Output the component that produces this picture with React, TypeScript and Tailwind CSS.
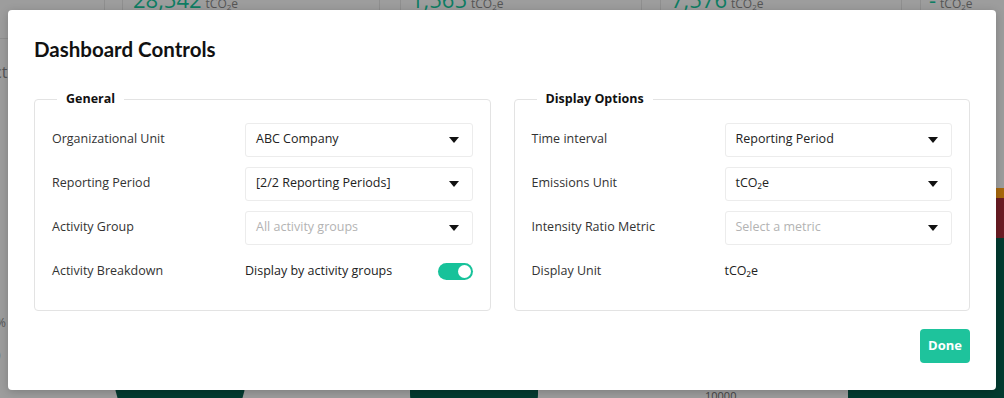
import React, { useState } from 'react';

const Caret = () => (
  <svg width="10" height="6" viewBox="0 0 10 6" className="shrink-0">
    <path d="M0 0 L10 0 L5 6 Z" fill="#111" />
  </svg>
);

interface SelectProps {
  value: string;
  placeholder?: boolean;
}

const SelectBox = ({ value, placeholder }: SelectProps) => (
  <div className="flex h-[34px] flex-1 items-center justify-between rounded-[3px] border border-[#ececec] bg-white pr-[13px] pl-[10px]">
    <span className={placeholder ? 'text-[#b3b3b3]' : 'text-[#222]'}>{value}</span>
    <Caret />
  </div>
);

const Row = ({ label, children }: { label: string; children: React.ReactNode }) => (
  <div className="flex h-[34px] items-center">
    <div className="w-[193px] shrink-0 text-[#333]">{label}</div>
    {children}
  </div>
);

const Toggle = () => {
  const [on, setOn] = useState(true);
  return (
    <button
      onClick={() => setOn(!on)}
      className={`flex h-[17px] w-[35px] items-center rounded-full p-[2px] ${on ? 'justify-end bg-[#17c29a]' : 'justify-start bg-[#ccc]'}`}
    >
      <span className="size-[13px] rounded-full bg-white" />
    </button>
  );
};

const Group = ({ title, children }: { title: string; children: React.ReactNode }) => (
  <fieldset className="flex-1 rounded-[4px] border border-[#e3e3e3] px-[17px] pt-[14px] pb-[21px]">
    <legend className="ml-[5px] px-[9px] text-[12.5px] font-bold text-[#111]">{title}</legend>
    <div className="flex flex-col gap-[10px]">{children}</div>
  </fieldset>
);

const BgStat = ({ value }: { value: string }) => (
  <div className="flex items-end gap-[4px] leading-none">
    <span className="text-[22px] text-[#0e7d63]">{value}</span>
    <span className="text-[12px] text-[#555]">
      tCO<sub className="text-[8px]">2</sub>e
    </span>
  </div>
);

export default function App() {
  return (
    <div
      className="relative h-[398px] w-[1004px] overflow-hidden bg-[#9d9d9d]"
      style={{ fontFamily: '"Open Sans", "Noto Sans", sans-serif' }}
    >
      {/* dimmed dashboard behind the dialog */}
      <div className="absolute top-[-12px] left-0 flex h-[22px] w-full">
        <div className="w-[105px] border-r border-[#8f8f8f]" />
        <div className="ml-[17px] flex w-[258px] items-end border-x border-[#8f8f8f] pl-[10px]"><BgStat value="28,542" /></div>
        <div className="ml-[20px] flex w-[242px] items-end border-x border-[#8f8f8f] pl-[10px]"><BgStat value="1,565" /></div>
        <div className="ml-[18px] flex w-[242px] items-end border-x border-[#8f8f8f] pl-[10px]"><BgStat value="7,576" /></div>
        <div className="ml-[18px] flex flex-1 items-end border-l border-[#8f8f8f] pl-[8px]"><BgStat value="-" /></div>
      </div>
      <div className="absolute top-[38px] left-0 h-px w-[8px] bg-[#8f8f8f]" />
      <div className="absolute top-[60px] left-[-6px] text-[16px] text-[#555]">ct</div>
      <div className="absolute top-[314px] left-[-4px] text-[12px] text-[#555]">%</div>
      <div className="absolute top-[346px] left-[-3px] text-[12px] text-[#555]">)</div>
      <div className="absolute top-[188px] right-0 h-[10px] w-[8px] bg-[#a8680c]" />
      <div className="absolute top-[198px] right-0 h-[40px] w-[8px] bg-[#6b1c24]" />
      <div className="absolute top-[238px] right-0 h-[160px] w-[8px] bg-[#033b30]" />
      <div className="absolute top-[384px] left-[115px] h-[40px] w-[130px] rounded-b-full bg-[#033b30]" />
      <div className="absolute top-[384px] left-[410px] h-[40px] w-[128px] rounded-b-[30px] bg-[#033b30]" />
      <div className="absolute top-[388px] left-[705px] text-[11px] text-[#444]">10000</div>
      <div className="absolute top-[384px] left-[848px] h-[20px] w-[160px] bg-[#033b30]" />

      {/* dialog */}
      <div className="absolute top-[10px] left-[8px] flex h-[380px] w-[988px] flex-col rounded-[4px] bg-white px-[26px] pt-[28px] text-[12.5px] shadow-[0_2px_10px_rgba(0,0,0,0.2)]">
        <h2
          className="text-[20.5px] leading-[22px] font-bold text-[#111]"
          style={{ fontFamily: 'Lato, "Noto Sans", sans-serif' }}
        >
          Dashboard Controls
        </h2>
        <div className="mt-[30px] flex gap-[23px]">
          <Group title="General">
            <Row label="Organizational Unit">
              <SelectBox value="ABC Company" />
            </Row>
            <Row label="Reporting Period">
              <SelectBox value="[2/2 Reporting Periods]" />
            </Row>
            <Row label="Activity Group">
              <SelectBox value="All activity groups" placeholder />
            </Row>
            <Row label="Activity Breakdown">
              <div className="flex flex-1 items-center justify-between">
                <span className="text-[#222]">Display by activity groups</span>
                <Toggle />
              </div>
            </Row>
          </Group>
          <Group title="Display Options">
            <Row label="Time interval">
              <SelectBox value="Reporting Period" />
            </Row>
            <Row label="Emissions Unit">
              <SelectBox value="tCO₂e" />
            </Row>
            <Row label="Intensity Ratio Metric">
              <SelectBox value="Select a metric" placeholder />
            </Row>
            <Row label="Display Unit">
              <span className="text-[#222]">tCO₂e</span>
            </Row>
          </Group>
        </div>
        <div className="mt-[18px] flex justify-end">
          <button className="h-[34px] w-[50px] rounded-[4px] bg-[#1ec39c] text-[13px] font-bold text-white">
            Done
          </button>
        </div>
      </div>
    </div>
  );
}
